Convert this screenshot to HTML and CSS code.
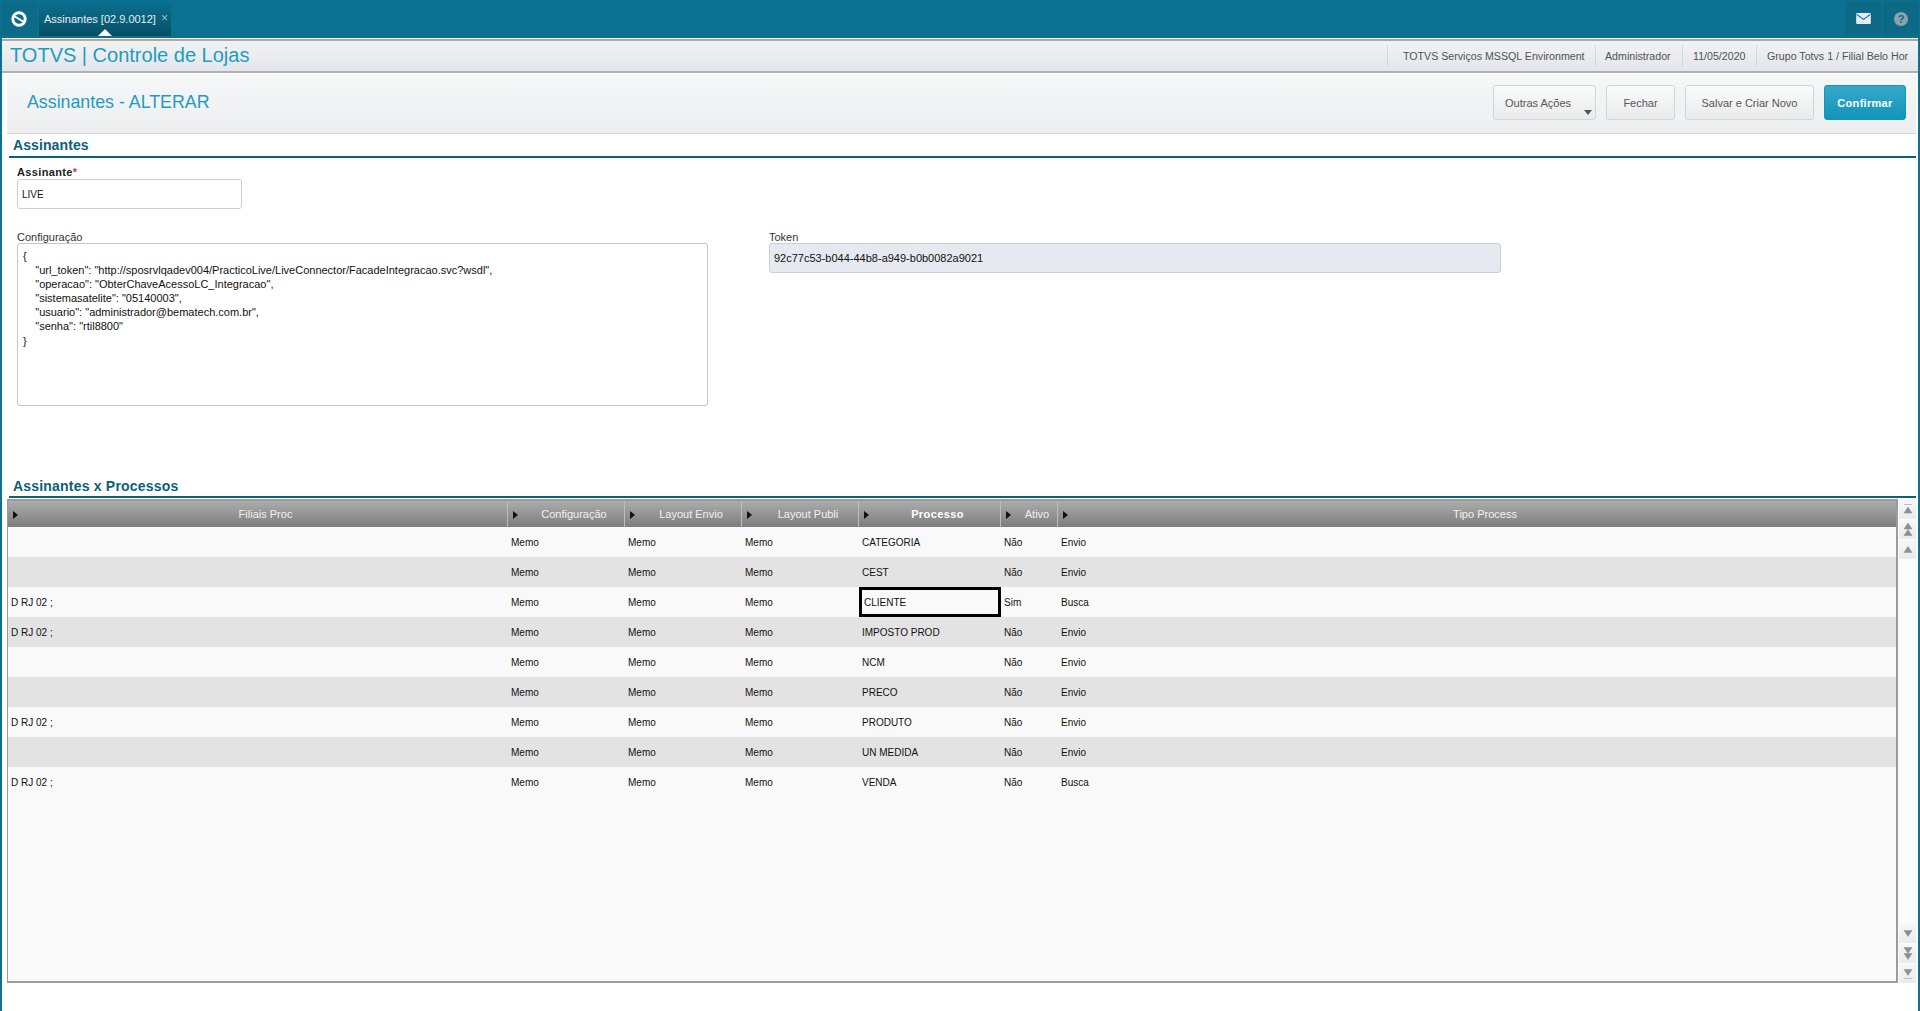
FILE: index.html
```html
<!DOCTYPE html>
<html lang="pt-BR">
<head>
<meta charset="utf-8">
<title>TOTVS | Controle de Lojas</title>
<link rel="stylesheet" href="styles.css">
</head>
<body>
<header class="topbar">
  <div class="logo-cell">
    <svg class="logo" viewBox="0 0 18 18" width="16" height="16"><circle cx="9" cy="9" r="7" fill="none" stroke="#fff" stroke-width="3.2"/><path d="M4 6.5 C7 6.8 11 11.2 14 11.5" fill="none" stroke="#fff" stroke-width="2.2"/></svg>
  </div>
  <div class="tab">
    <span class="tab-label">Assinantes [02.9.0012]</span>
    <span class="tab-close">×</span>
    <span class="tab-arrow"></span>
  </div>
  <div class="top-spacer"></div>
  <div class="top-icon">
    <svg viewBox="0 0 16 12" width="15" height="11"><rect width="16" height="12" rx="1" fill="#e3edf1"/><path d="M0.5 1.5 L8 7 L15.5 1.5" fill="none" stroke="#0b6a86" stroke-width="1.2"/></svg>
  </div>
  <div class="top-icon">
    <svg viewBox="0 0 14 14" width="14" height="14"><circle cx="7" cy="7" r="7" fill="#8ba3af"/><text x="7" y="11" text-anchor="middle" class="help-mark">?</text></svg>
  </div>
</header>

<div class="frame">
  <div class="appbar">
    <div class="app-title">TOTVS | Controle de Lojas</div>
    <ul class="app-info">
      <li class="info-env">TOTVS Serviços MSSQL Environment</li>
      <li class="info-user">Administrador</li>
      <li class="info-date">11/05/2020</li>
      <li class="info-branch">Grupo Totvs 1 / Filial Belo Hor</li>
    </ul>
  </div>

  <div class="content">
    <div class="page-head">
      <h1 class="page-title">Assinantes - ALTERAR</h1>
      <div class="actions">
        <button class="btn btn-more">Outras Ações<span class="caret"></span></button>
        <button class="btn btn-close">Fechar</button>
        <button class="btn btn-new">Salvar e Criar Novo</button>
        <button class="btn btn-primary">Confirmar</button>
      </div>
    </div>

    <h2 class="section section-first">Assinantes</h2>
    <div class="form">
      <label class="label-strong">Assinante<span class="req">*</span></label>
      <div class="input input-short">LIVE</div>
      <div class="form-row">
        <div class="field-config">
          <label class="label">Configuração</label>
          <pre class="textarea">{
    "url_token": "http://sposrvlqadev004/PracticoLive/LiveConnector/FacadeIntegracao.svc?wsdl",
    "operacao": "ObterChaveAcessoLC_Integracao",
    "sistemasatelite": "05140003",
    "usuario": "administrador@bematech.com.br",
    "senha": "rtil8800"
}</pre>
        </div>
        <div class="field-token">
          <label class="label">Token</label>
          <div class="input input-disabled">92c77c53-b044-44b8-a949-b0b0082a9021</div>
        </div>
      </div>
    </div>

    <h2 class="section section-second">Assinantes x Processos</h2>
    <div class="grid-wrap">
      <div class="grid">
        <div class="row head">
          <div class="th"><i class="sort"></i><span>Filiais Proc</span></div>
          <div class="th"><i class="sort"></i><span>Configuração</span></div>
          <div class="th"><i class="sort"></i><span>Layout Envio</span></div>
          <div class="th"><i class="sort"></i><span>Layout Publi</span></div>
          <div class="th th-active"><i class="sort"></i><span>Processo</span></div>
          <div class="th"><i class="sort"></i><span>Ativo</span></div>
          <div class="th"><i class="sort"></i><span>Tipo Process</span></div>
        </div>
        <div class="row"><div></div><div>Memo</div><div>Memo</div><div>Memo</div><div>CATEGORIA</div><div>Não</div><div>Envio</div></div>
        <div class="row alt"><div></div><div>Memo</div><div>Memo</div><div>Memo</div><div>CEST</div><div>Não</div><div>Envio</div></div>
        <div class="row"><div>D RJ 02 ;</div><div>Memo</div><div>Memo</div><div>Memo</div><div class="selected">CLIENTE</div><div>Sim</div><div>Busca</div></div>
        <div class="row alt"><div>D RJ 02 ;</div><div>Memo</div><div>Memo</div><div>Memo</div><div>IMPOSTO PROD</div><div>Não</div><div>Envio</div></div>
        <div class="row"><div></div><div>Memo</div><div>Memo</div><div>Memo</div><div>NCM</div><div>Não</div><div>Envio</div></div>
        <div class="row alt"><div></div><div>Memo</div><div>Memo</div><div>Memo</div><div>PRECO</div><div>Não</div><div>Envio</div></div>
        <div class="row"><div>D RJ 02 ;</div><div>Memo</div><div>Memo</div><div>Memo</div><div>PRODUTO</div><div>Não</div><div>Envio</div></div>
        <div class="row alt"><div></div><div>Memo</div><div>Memo</div><div>Memo</div><div>UN MEDIDA</div><div>Não</div><div>Envio</div></div>
        <div class="row"><div>D RJ 02 ;</div><div>Memo</div><div>Memo</div><div>Memo</div><div>VENDA</div><div>Não</div><div>Busca</div></div>
      </div>
      <div class="scrollbar">
        <div class="sb-group">
          <div class="sb-btn"><svg viewBox="0 0 10 11" width="10" height="11"><path d="M1 0.5H9M5 3L9 9H1Z" class="sb-ico"/></svg></div>
          <div class="sb-btn"><svg viewBox="0 0 10 13" width="10" height="13"><path d="M5 0L9 6H1ZM5 6.5L9 12.5H1Z" class="sb-ico"/></svg></div>
          <div class="sb-btn"><svg viewBox="0 0 10 7" width="10" height="7"><path d="M5 0.5L9 6.5H1Z" class="sb-ico"/></svg></div>
        </div>
        <div class="sb-group">
          <div class="sb-btn"><svg viewBox="0 0 10 7" width="10" height="7"><path d="M1 0.5H9L5 6.5Z" class="sb-ico"/></svg></div>
          <div class="sb-btn"><svg viewBox="0 0 10 13" width="10" height="13"><path d="M1 0.5H9L5 6.5ZM1 6.5H9L5 12.5Z" class="sb-ico"/></svg></div>
          <div class="sb-btn"><svg viewBox="0 0 10 11" width="10" height="11"><path d="M1 1.5H9L5 7.5ZM1 10.5H9" class="sb-ico"/></svg></div>
        </div>
      </div>
    </div>
  </div>
</div>
</body>
</html>
```
FILE: styles.css
```css
* { box-sizing: border-box; }
html, body { margin: 0; height: 100%; overflow: hidden; }
body {
  height: 1011px;
  display: flex;
  flex-direction: column;
  background: #fff;
  font-family: "Liberation Sans", Arial, sans-serif;
  color: #222;
}

/* top bar */
.topbar {
  flex: 0 0 38px;
  display: flex;
  background: #0b7191;
  padding: 1px 1px 2px 1px;
  gap: 2px;
}
.logo-cell {
  width: 36px;
  display: flex;
  align-items: center;
  justify-content: center;
  background: #0c6b88;
}
.tab {
  position: relative;
  width: 132px;
  display: flex;
  align-items: center;
  padding-left: 5px;
  background: linear-gradient(#0b7190, #064f65);
  color: #e6f0f3;
  font-size: 11px;
}
.tab-close { margin-left: 5px; color: #a4bcc5; font-size: 12px; position: relative; top: -1px; }
.tab-arrow {
  position: absolute;
  left: 59px;
  bottom: 0;
  border-left: 7px solid transparent;
  border-right: 7px solid transparent;
  border-bottom: 7px solid #fff;
}
.top-spacer { flex: 1; }
.top-icon {
  width: 36px;
  display: flex;
  align-items: center;
  justify-content: center;
  background: #0c6a87;
}
.help-mark { font: bold 11px "Liberation Sans", Arial, sans-serif; fill: #0c6a87; }

/* frame */
.frame {
  flex: 1;
  min-height: 0;
  display: flex;
  flex-direction: column;
  border-left: 2px solid #0b7191;
  border-right: 2px solid #0b7191;
}
.appbar {
  flex: 0 0 34px;
  margin-top: 1px;
  display: flex;
  align-items: center;
  justify-content: space-between;
  background: linear-gradient(#f1f2f4, #e3e6ea);
  border-top: 2px solid #a9a9a9;
  border-bottom: 2px solid #b0b0b0;
  padding-left: 8px;
}
.app-title { color: #1f9cc1; font-size: 20px; padding-bottom: 2px; }
.app-info {
  list-style: none;
  margin: 0;
  padding: 0;
  display: flex;
  height: 22px;
  font-size: 10.65px;
  color: #4d5358;
}
.app-info li {
  display: flex;
  align-items: center;
  border-left: 1px solid #d4d7db;
}
.info-env { width: 208px; padding-left: 15px; }
.info-user { width: 87px; padding-left: 9px; }
.info-date { width: 74px; padding-left: 10px; }
.info-branch { width: 162px; padding-left: 10px; }

.content {
  flex: 1;
  min-height: 0;
  padding: 1px 2px 0 5px;
  display: flex;
  flex-direction: column;
}
.page-head {
  flex: 0 0 60px;
  display: flex;
  align-items: center;
  justify-content: space-between;
  background: linear-gradient(#f6f7f7, #eceef0);
  border-bottom: 1px solid #d6d6d6;
  padding: 0 10px 0 20px;
}
.page-title { margin: 0 0 2px; font-size: 17.8px; font-weight: normal; color: #1f9cc1; }
.actions { display: flex; gap: 10px; margin-bottom: 2px; }
.btn {
  position: relative;
  height: 35px;
  padding: 0;
  font: 11px "Liberation Sans", Arial, sans-serif;
  color: #565656;
  border: 1px solid #d5d5d5;
  border-radius: 3px;
  background: linear-gradient(#fafafa, #eaebec);
}
.btn-more { width: 103px; text-align: left; padding-left: 11px; }
.btn-close { width: 69px; }
.btn-new { width: 129px; }
.btn-primary {
  width: 82px;
  color: #fff;
  font-weight: bold;
  letter-spacing: .3px;
  border-color: #1795b8;
  background: linear-gradient(#35a9c9, #1294b8);
}
.caret {
  position: absolute;
  right: 3px;
  bottom: 4px;
  border-left: 4.5px solid transparent;
  border-right: 4.5px solid transparent;
  border-top: 5px solid #555;
}

/* sections */
.section {
  margin: 0 0 0 2px;
  color: #0a5f78;
  font-size: 14px;
  font-weight: bold;
  letter-spacing: .2px;
  padding-left: 4px;
  border-bottom: 2px solid #0a6079;
  line-height: 17px;
}
.section-first { height: 24px; padding-top: 3px; letter-spacing: .1px; }
.section-second { height: 20px; }

.form {
  flex: 0 0 320px;
  padding: 8px 0 0 10px;
}
.label-strong { display: block; font-size: 11px; font-weight: bold; letter-spacing: .35px; line-height: 13px; color: #222; }
.req { color: #d33; }
.label { display: block; font-size: 11px; line-height: 12px; color: #333; }
.input {
  display: flex;
  align-items: center;
  height: 30px;
  padding-left: 4px;
  font-size: 10px;
  color: #111;
  background: #fff;
  border: 1px solid #cfcfcf;
  border-radius: 3px;
}
.input-short { width: 225px; }
.form-row { display: flex; margin-top: 22px; }
.field-config { width: 752px; }
.textarea {
  margin: 0;
  width: 691px;
  height: 163px;
  padding: 5px 5px;
  font: 11px/14.1px "Liberation Sans", Arial, sans-serif;
  color: #111;
  border: 1px solid #c6c6c6;
  border-radius: 3px;
  white-space: pre-wrap;
  overflow: hidden;
}
.field-token { width: 732px; }
.input-disabled { background: #e6e9ef; border-color: #cbced3; padding-left: 4px; font-size: 11px; }

/* grid */
.grid-wrap { flex: 0 0 484px; display: flex; margin-top: 1px; }
.grid {
  width: 1891px;
  background: #f9f9f9;
  border-style: solid;
  border-color: #9b9b9b;
  border-width: 2px 2px 2px 1px;
}
.row {
  display: grid;
  grid-template-columns: 500px 117px 117px 117px 142px 57px 1fr;
  height: 30px;
  font-size: 10px;
  color: #111;
}
.row > div { display: flex; align-items: center; padding-left: 3px; }
.alt { background: #e3e3e3; }
.head {
  height: 26px;
  background: linear-gradient(#acacac, #7d7d7d);
  color: #f1f1f1;
  font-size: 11px;
}
.row > .th { padding-left: 0; border-right: 1px solid #bdbdbd; }
.row > .th:last-child { border-right: 0; }
.th span { flex: 1; text-align: center; }
.th-active { font-weight: bold; letter-spacing: .4px; color: #fff; }
.sort {
  flex: 0 0 auto;
  margin: 2px 6px 0 5px;
  border-top: 4px solid transparent;
  border-bottom: 4px solid transparent;
  border-left: 5px solid #111;
}
.row > .selected { border: 3px solid #000; padding-left: 2px; }

.scrollbar {
  flex: 1;
  padding-left: 1px;
  background: #fbfbfc;
  display: flex;
  flex-direction: column;
  justify-content: space-between;
}
.sb-group { display: flex; flex-direction: column; gap: 1px; margin-top: 1px; }
.sb-btn {
  height: 19px;
  display: flex;
  align-items: center;
  justify-content: center;
  background: linear-gradient(#f6f7f8, #e9ebed);
}
.sb-ico { fill: #8f8f8f; stroke: #8f8f8f; stroke-width: .5; }
```
